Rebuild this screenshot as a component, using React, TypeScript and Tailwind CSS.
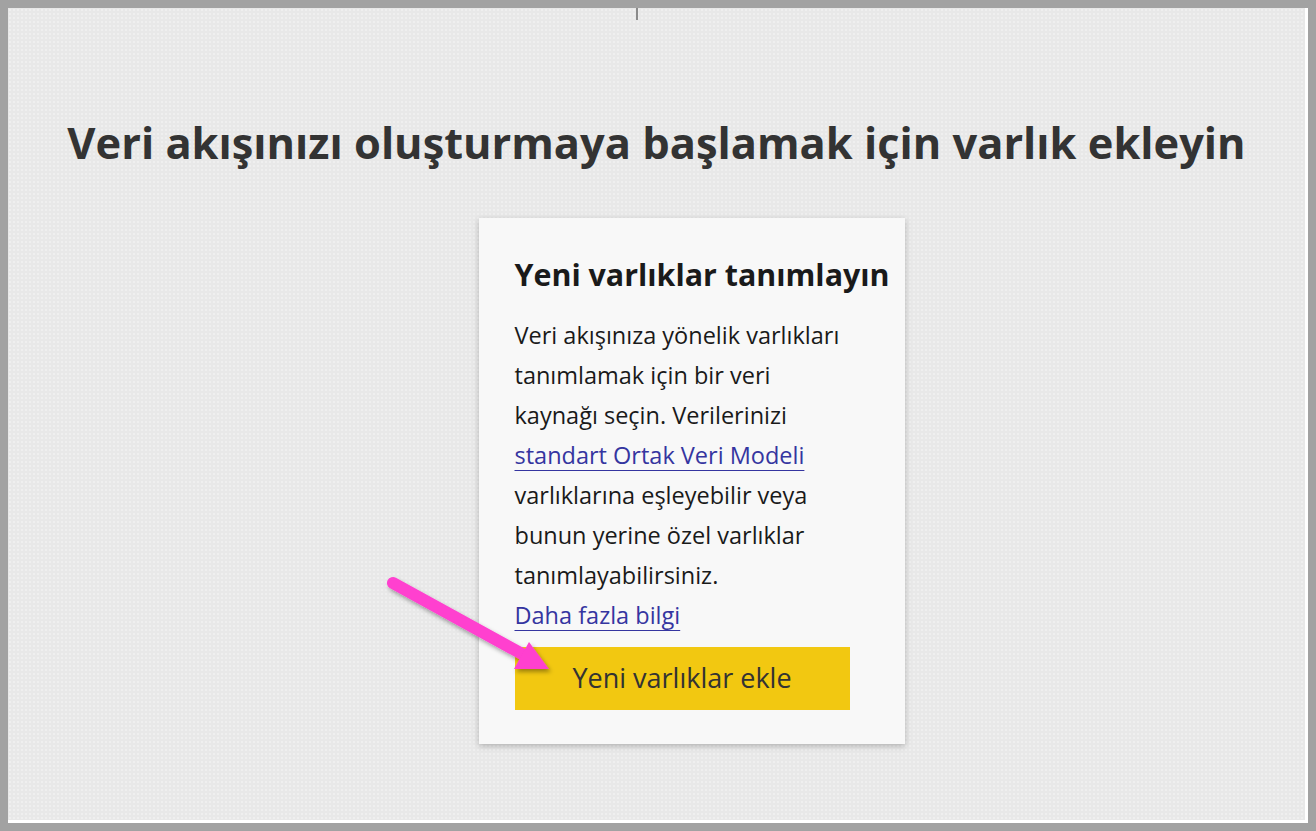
import React from "react"

const font = { fontFamily: '"Open Sans", "Noto Sans", Arial, sans-serif' }

const bodyLines: { text: string; link?: boolean }[] = [
  { text: "Veri akışınıza yönelik varlıkları" },
  { text: "tanımlamak için bir veri" },
  { text: "kaynağı seçin. Verilerinizi" },
  { text: "standart Ortak Veri Modeli", link: true },
  { text: "varlıklarına eşleyebilir veya" },
  { text: "bunun yerine özel varlıklar" },
  { text: "tanımlayabilirsiniz." },
  { text: "Daha fazla bilgi", link: true },
]

function PinkArrow() {
  return (
    <svg className="pointer-events-none absolute left-0 top-0" width="1316" height="831" viewBox="0 0 1316 831">
      <defs>
        <filter id="sh" x="-20%" y="-20%" width="140%" height="140%">
          <feDropShadow dx="2" dy="3" stdDeviation="2" floodColor="#000" floodOpacity="0.35" />
        </filter>
      </defs>
      <g filter="url(#sh)">
        <line x1="393" y1="583" x2="524" y2="655" stroke="#ff3fcf" strokeWidth="12" strokeLinecap="round" />
        <polygon points="529,642 514,669 549,669" fill="#ff3fcf" />
      </g>
    </svg>
  )
}

export default function App() {
  return (
    <div className="relative h-[831px] w-[1316px] overflow-hidden bg-[#a2a2a2] p-2" style={font}>
      <div className="relative flex h-full w-full flex-col items-center border-b-[3px] border-r-[3px] border-white bg-[#e8e8e8] bg-[radial-gradient(#efefef_1px,transparent_1px)] bg-[size:4px_4px]">
        <div className="absolute left-[628px] top-0 h-[12px] w-[2px] bg-[#8a8a8a]" />
        <h1 className="mt-[113px] whitespace-nowrap text-[43.4px] font-bold leading-none text-[#333333]">
          Veri akışınızı oluşturmaya başlamak için varlık ekleyin
        </h1>
        <div className="ml-[70px] mt-[54px] h-[526px] w-[426px] bg-[#f8f8f8] pl-[36px] pt-[42px] shadow-[0_2px_6px_rgba(0,0,0,0.25)]">
          <h2 className="whitespace-nowrap text-[30.4px] font-bold leading-none text-[#1a1a1a]">Yeni varlıklar tanımlayın</h2>
          <div className="mt-[24px] text-[23.5px] leading-[40px] text-[#1a1a1a]">
            {bodyLines.map((l) =>
              l.link ? (
                <div key={l.text} className="whitespace-nowrap">
                  <a href="#" className="text-[#3535a0] underline decoration-1 underline-offset-[6px]">
                    {l.text}
                  </a>
                </div>
              ) : (
                <div key={l.text} className="whitespace-nowrap">
                  {l.text}
                </div>
              )
            )}
          </div>
          <button className="mt-[12px] flex h-[63px] w-[335px] items-center justify-center bg-[#f2c811] text-[27px] text-[#333333]">
            Yeni varlıklar ekle
          </button>
        </div>
      </div>
      <PinkArrow />
    </div>
  )
}
